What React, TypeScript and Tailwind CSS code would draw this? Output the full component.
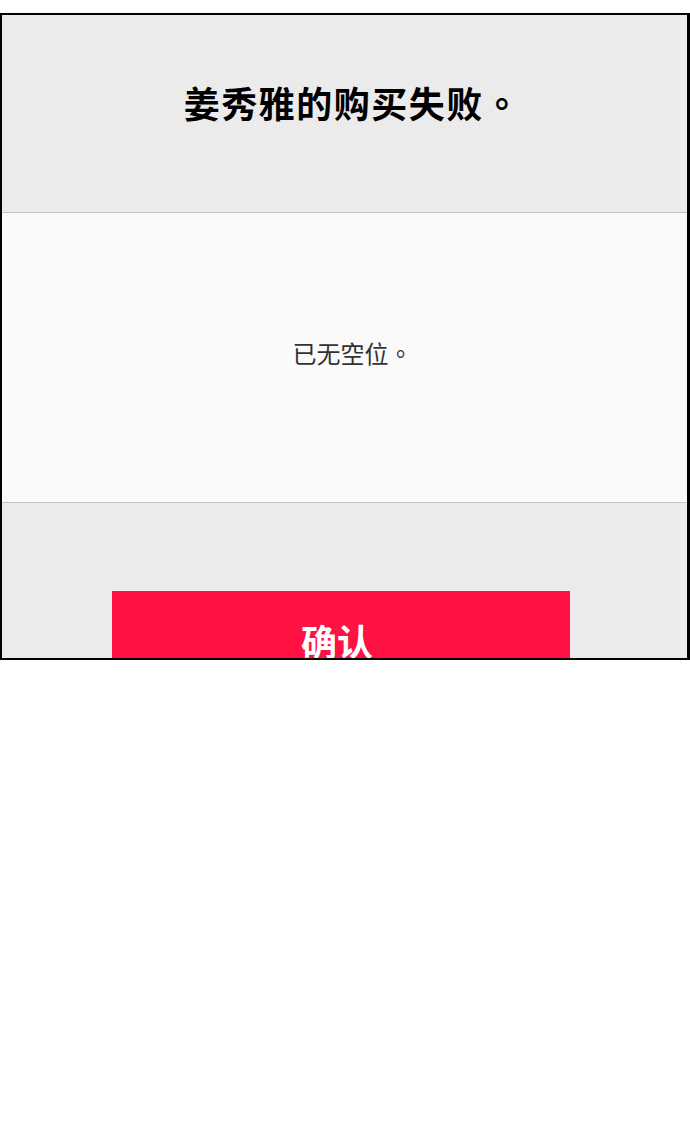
export default function App() {
  const font = { fontFamily: '"Noto Sans CJK TC", "Noto Sans", sans-serif' };
  return (
    <div className="w-[690px] h-[1121px] bg-white pt-[13px]" style={font}>
      <div className="h-[647px] border-t-2 border-b-2 border-l-2 border-r-[3px] border-black overflow-hidden flex flex-col">
        <div className="h-[198px] shrink-0 bg-[#ebebeb] flex items-center justify-center border-b border-[#c2c2c2]">
          <h1 className="text-[36px] font-bold text-black leading-none tracking-[1.5px] -mt-[23px] ml-[16px]">姜秀雅的购买失败。</h1>
        </div>
        <div className="h-[290px] shrink-0 bg-[#fafafa] flex items-center justify-center border-b border-[#c2c2c2]">
          <p className="text-[24px] text-[#333333] leading-none -mt-[9px] ml-[16px]">已无空位。</p>
        </div>
        <div className="flex-1 bg-[#ebebeb] pt-[88px] pl-[110px]">
          <button className="w-[458px] h-[100px] bg-[#ff1144] text-white text-[36px] font-bold leading-none flex justify-center pt-[31px] pr-[8px]">
            确认
          </button>
        </div>
      </div>
    </div>
  );
}
